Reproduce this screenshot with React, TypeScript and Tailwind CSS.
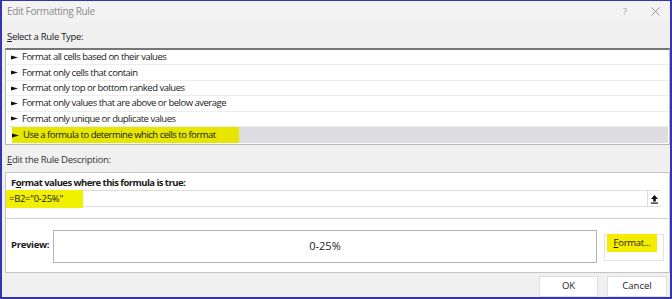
import React from "react";

const RULES = [
  "Format all cells based on their values",
  "Format only cells that contain",
  "Format only top or bottom ranked values",
  "Format only values that are above or below average",
  "Format only unique or duplicate values",
];

const FONT = { fontFamily: '"Open Sans", "Noto Sans", Arial, sans-serif' };

export default function App() {
  return (
    <div
      className="w-[672px] h-[299px] overflow-hidden bg-[#f0f0f0] border-x-2 border-t border-b-2 border-[#3535b0] flex flex-col text-[#1a1a1a]"
      style={FONT}
    >
      {/* Title bar */}
      <div className="h-[21px] bg-[#f3f3f3] flex items-center pl-[5px] pr-[10px] shrink-0">
        <span className="text-[10px] text-[#8c8c8c] tracking-[-0.35px]">Edit Formatting Rule</span>
        <span className="ml-auto text-[9px] text-[#a0a0a0] mr-[24px]">?</span>
        <svg width="9" height="9" viewBox="0 0 9 9" className="mb-[1px]">
          <path d="M0.5 0.5L8.5 8.5M8.5 0.5L0.5 8.5" stroke="#8a8a8a" strokeWidth="0.9" />
        </svg>
      </div>

      <div className="flex flex-col pl-[3px] flex-1">
        <div className="h-[26px] flex items-end pb-[4px] pl-[2px] text-[9.5px] tracking-[-0.3px]">
          <span>
            <span className="underline">S</span>elect a Rule Type:
          </span>
        </div>

        {/* Rule list */}
        <div className="h-[97px] bg-white border border-[#b8b8b8] border-t-2 border-t-[#767676] flex flex-col text-[9.5px] tracking-[-0.5px]">
          {RULES.map((r) => (
            <div key={r} className="h-[15.5px] flex items-center pl-[5px] border-b border-[#ededed]">
              <Arrow />
              <span className="ml-[4px]">{r}</span>
            </div>
          ))}
          <div className="h-[17px] flex pl-[6px] pr-[1px] pb-[1px]">
            <div className="flex-1 bg-[#dcdce1] flex">
              <span className="bg-[#e6e600] flex items-center pr-[23px]">
                <Arrow />
                <span className="ml-[4px]">Use a formula to determine which cells to format</span>
              </span>
            </div>
          </div>
        </div>

        <div className="h-[27px] flex items-end pb-[5px] pl-[2px] text-[9.5px] tracking-[-0.3px] text-[#333]">
          <span>
            <span className="underline">E</span>dit the Rule Description:
          </span>
        </div>

        {/* Description panel */}
        <div className="h-[101px] bg-white border border-[#c4c4c4] flex flex-col">
          <div className="h-[17px] flex items-end pl-[5px] text-[9.5px] font-bold tracking-[-0.55px]">
            <span>
              F<span className="underline">o</span>rmat values where this formula is true:
            </span>
          </div>
          <div className="h-[17px] mr-[8px] border-y border-[#dcdcdc] flex items-stretch">
            <span className="bg-[#f0f000] flex items-center pl-[3px] pr-[20px] text-[9.5px] tracking-[-0.3px] -my-[1px] h-[18px]">
              =B2="0-25%"
            </span>
            <div className="ml-auto w-[14px] border-l border-[#dcdcdc] flex items-center justify-center">
              <svg width="9" height="10" viewBox="0 0 9 10">
                <path d="M4.5 1L1 5H3.2V7.5H5.8V5H8Z" fill="#111" />
                <rect x="1" y="8.5" width="7" height="1.2" fill="#111" />
              </svg>
            </div>
          </div>
          <div className="h-[12px] border-b border-[#cfcfcf]" />
          <div className="flex items-center flex-1 pl-[5px]">
            <span className="w-[42px] text-[9.5px] font-bold tracking-[-0.3px]">Preview:</span>
            <div className="w-[544px] h-[33px] border border-[#b4b4b4] flex items-center justify-center text-[11px] mt-[2px]">
              0-25%
            </div>
            <div className="ml-[7px] w-[60px] h-[27px] border border-[#e4e4e4] flex items-start mt-[4px]">
              <span className="mt-[-1px] ml-[2px] w-[50px] h-[18px] bg-[#f5ed00] flex items-center justify-center text-[9.5px] tracking-[-0.3px]">
                <span>
                  <span className="underline">F</span>ormat...
                </span>
              </span>
            </div>
          </div>
        </div>

        {/* Footer buttons */}
        <div className="flex-1 flex items-end justify-end gap-[9px] pr-[3px]">
          <button className="w-[59px] h-[21px] bg-white border border-[#e0e0e0] text-[9.5px]">OK</button>
          <button className="w-[60px] h-[21px] bg-white border border-[#e0e0e0] text-[9.5px]">Cancel</button>
        </div>
      </div>
    </div>
  );
}

function Arrow() {
  return (
    <svg width="7" height="5" viewBox="0 0 7 5" className="shrink-0">
      <path d="M0 0.5L7 2.5L0 4.5Z" fill="#111" />
    </svg>
  );
}
